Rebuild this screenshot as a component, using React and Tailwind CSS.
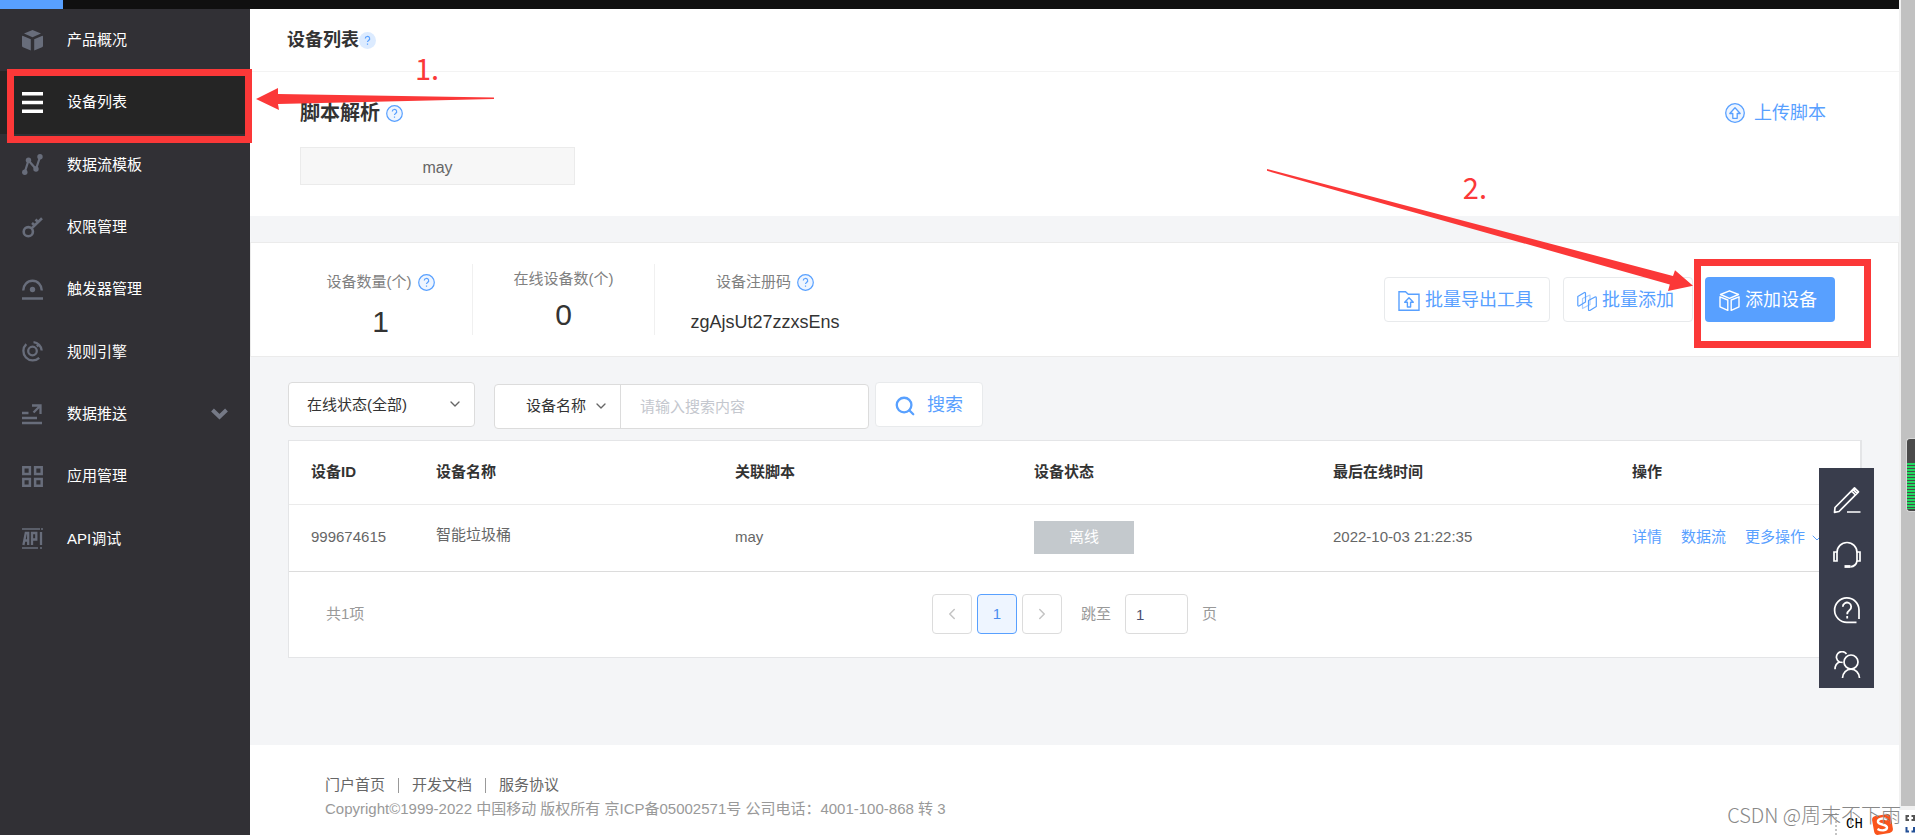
import { ChevronDown, ChevronLeft, ChevronRight, Search } from "lucide-react";

const navItems = [
  { label: "产品概况", icon: CubeIcon },
  { label: "设备列表", icon: ListIcon, active: true },
  { label: "数据流模板", icon: StreamIcon },
  { label: "权限管理", icon: KeyIcon },
  { label: "触发器管理", icon: TriggerIcon },
  { label: "规则引擎", icon: RuleIcon },
  { label: "数据推送", icon: PushIcon, expandable: true },
  { label: "应用管理", icon: AppsIcon },
  { label: "API调试", icon: ApiIcon },
];

const devices = [
  { id: "999674615", name: "智能垃圾桶", script: "may", status: "离线", lastOnline: "2022-10-03 21:22:35" },
];

/* ================= SIDEBAR ICONS ================= */

function CubeIcon() {
  return (
    <svg className="size-[21px]" viewBox="0 0 21 21" fill="currentColor" aria-hidden="true">
      <path d="M10.500 0 19 3.400 10.500 7.200 2 3.400z" />
      <path d="M0 6.800Q0 5.500 1.200 6l7.600 3.200v11.300L1 17.300Q0 17 0 15.800z" />
      <path d="M21 6.800Q21 5.500 19.800 6l-7.600 3.200v11.300l7.800-3.200q1-.300 1-1.500z" />
    </svg>
  );
}

function ListIcon() {
  return (
    <svg className="size-[21px]" viewBox="0 0 21 21" fill="currentColor" aria-hidden="true">
      <path d="M0 0h21v3.400H0zM0 8.800h21v3.400H0zM0 17.600h21V21H0z" />
    </svg>
  );
}

function StreamIcon() {
  return (
    <svg className="size-[21px]" viewBox="0 0 21 21" fill="currentColor" aria-hidden="true">
      <path d="M2.800 18 6.500 6.500 14 15 18 3" fill="none" stroke="currentColor" strokeWidth="2.200" />
      <circle cx="2.800" cy="18.200" r="2.700" />
      <circle cx="6.500" cy="6.300" r="2.700" />
      <circle cx="14" cy="15" r="2.700" />
      <circle cx="18" cy="2.800" r="2.700" />
    </svg>
  );
}

function KeyIcon() {
  return (
    <svg className="size-[21px]" viewBox="0 0 21 21" fill="none" stroke="currentColor" strokeWidth="2.600" aria-hidden="true">
      <circle cx="6.300" cy="14.700" r="4.600" />
      <path d="M9.600 11.400 20 1.200M10 6l3.500 3M13.500 2.500l3.200 3" />
    </svg>
  );
}

function TriggerIcon() {
  return (
    <svg className="size-[21px]" viewBox="0 0 21 21" fill="none" stroke="currentColor" strokeWidth="2.400" aria-hidden="true">
      <path d="M1.200 11.500a9.300 9.800 0 0 1 18.600 0M0 19.500h21" />
      <circle cx="10.500" cy="10.500" r="2.700" fill="currentColor" stroke="none" />
    </svg>
  );
}

function RuleIcon() {
  return (
    <svg className="size-[21px]" viewBox="0 0 21 21" fill="none" stroke="currentColor" strokeWidth="2.300" aria-hidden="true">
      <circle cx="10.500" cy="10" r="4.300" />
      <path d="M4.300 3.200a9.300 9.300 0 0 0 12.900 13.600M11.500 1.200a9 9 0 0 1 8.200 8.300M15 3.500l1.500 2" />
    </svg>
  );
}

function PushIcon() {
  return (
    <svg className="size-[21px]" viewBox="0 0 21 21" fill="none" stroke="currentColor" strokeWidth="2.300" aria-hidden="true">
      <path d="M0 9h6.500M0 14h15M0 19h20M10 1.500h8.500V10M18.500 1.500l-7 7" />
    </svg>
  );
}

function AppsIcon() {
  return (
    <svg className="size-[21px]" viewBox="0 0 21 21" fill="none" stroke="currentColor" strokeWidth="2.500" aria-hidden="true">
      <path d="M1.300 1.300h6.600v6.600H1.300zM13.100 1.300h6.600v6.600h-6.600zM1.300 13.100h6.600v6.600H1.300zM13.100 13.100h6.600v6.600h-6.600z" />
    </svg>
  );
}

function ApiIcon() {
  return (
    <svg className="size-[21px]" viewBox="0 0 21 21" fill="none" stroke="currentColor" strokeWidth="2.300" aria-hidden="true">
      <path d="M0 1h18M19 1h2M0 20h16M18 20h2" strokeWidth="1.600" />
      <path d="M1.400 17 3.800 5h2.400v12M2.500 12.500h3.500M10 17V5h4.300v6.500H10M19 4v13" />
    </svg>
  );
}

/* ================= PAGE ICONS ================= */

function HelpIcon({ plain }) {
  return (
    <svg className="size-[17px] text-[#58a0ff]" viewBox="0 0 17 17" fill="none" stroke="currentColor" aria-hidden="true">
      {plain ? (
        <circle cx="8.500" cy="8.500" r="8.500" fill="#dcebff" stroke="none" />
      ) : (
        <circle cx="8.500" cy="8.500" r="7.800" fill="#eef5ff" strokeWidth="1.200" />
      )}
      <path d="M6.300 6.600a2.200 2.100 0 1 1 3.300 1.800q-1.100.700-1.100 1.700M8.500 11.400v1.400" strokeWidth="1.200" />
    </svg>
  );
}

function UploadIcon() {
  return (
    <svg className="size-5" viewBox="0 0 20 20" fill="none" stroke="currentColor" strokeWidth="1.300" aria-hidden="true">
      <circle cx="10" cy="10" r="9.300" fill="#eef5ff" />
      <path d="M10 4.800 4.800 10.500h3v4.800h4.400v-4.800h3z" fill="#fff" strokeLinejoin="round" />
    </svg>
  );
}

function FolderUpIcon() {
  return (
    <svg className="h-5 w-[22px]" viewBox="0 0 22 20" fill="none" stroke="currentColor" strokeWidth="1.400" aria-hidden="true">
      <path d="M1 .800h6.500l2.800 2.400H21v16H1z" />
      <path d="M11 6.800 6.700 11.300h2.700V16h3.200v-4.700h2.700z" strokeLinejoin="round" />
    </svg>
  );
}

function BatchIcon() {
  return (
    <svg className="size-5" viewBox="0 0 20 20" fill="none" stroke="currentColor" strokeWidth="1.200" strokeLinejoin="round" aria-hidden="true">
      <path d="M.800 5.500 7.500 1.500Q8.500 1.300 8.500 2.500V11L2 15Q.800 15.300.800 14z" />
      <path d="M5.500 7.500 13 4v9.500l-7.500 4z" opacity=".5" />
      <path d="M11.500 9.500 18 6q1.300-.300 1.300 1v8.500l-6.500 4q-1.300.300-1.300-1z" />
    </svg>
  );
}

function BoxIcon() {
  return (
    <svg className="size-[21px]" viewBox="0 0 21 21" fill="none" stroke="currentColor" strokeWidth="1.400" strokeLinejoin="round" aria-hidden="true">
      <path d="M10.500.800 19.500 4.500l-9 3.800-9-3.800z" />
      <path d="M1 6.800v10l7.800 3.600V10zM20 6.800v10l-7.800 3.600V10z" />
    </svg>
  );
}

function PencilIcon() {
  return (
    <svg className="size-7" viewBox="0 0 28 28" fill="none" stroke="currentColor" strokeWidth="1.700" strokeLinejoin="round" aria-hidden="true">
      <path d="M1.500 26.300 2 21.500 21.500 1.800l4 4L6 25.500zM18.500 5l4 4M20 3.400l4 4M14 26h13.500" />
    </svg>
  );
}

function HeadsetIcon() {
  return (
    <svg className="size-7" viewBox="0 0 28 28" fill="none" stroke="currentColor" strokeWidth="1.700" aria-hidden="true">
      <path d="M1 11h3v9H1zM24 11h3v9h-3z" />
      <path d="M4 11.500a10 10 0 0 1 20 0M24 20c-.500 3-3 5.500-6.500 5.800" />
      <path d="M11.500 25.500h6" strokeWidth="2.800" />
    </svg>
  );
}

function QuestionIcon() {
  return (
    <svg className="size-7" viewBox="0 0 28 28" fill="none" stroke="currentColor" strokeWidth="1.700" aria-hidden="true">
      <path d="M26 23V14A12.200 12.200 0 1 0 14 26.300h9.500" />
      <path d="M9.800 10.800a4.200 4.200 0 1 1 6.600 3.400q-2.200 1.600-2.200 4M14.200 20v2.400" strokeWidth="1.800" />
    </svg>
  );
}

function UsersIcon() {
  return (
    <svg className="size-7" viewBox="0 0 28 28" fill="none" stroke="currentColor" strokeWidth="1.700" aria-hidden="true">
      <circle cx="18" cy="11" r="7" />
      <path d="M9.500 27c.300-5.500 4-8.800 8.500-8.800s8.200 3.300 8.500 8.800M13.500 3A5.500 5.500 0 1 0 6.500 11C3.500 12.300 2 15 2 18.300M6.500 11l3.200.500" />
    </svg>
  );
}

/* ================= PARTS ================= */

function Sidebar() {
  return (
    <aside className="w-[250px] shrink-0 bg-[#313035]">
      <nav className="flex h-[561px] flex-col">
        {navItems.map(({ label, icon: Icon, active, expandable }) => (
          <a
            key={label}
            href="#"
            className={`flex flex-1 items-center pl-[22px] pr-[22px] text-[15px] text-white ${active ? "bg-[#252525]" : ""}`}
          >
            <span className={active ? "text-white" : "text-[#686d7b]"}>
              <Icon />
            </span>
            <span className="ml-6">{label}</span>
            {expandable && (
              <svg className="ml-auto h-3 w-[17px] text-[#757986]" viewBox="0 0 17 12" fill="none" stroke="currentColor" strokeWidth="4" aria-hidden="true">
                <path d="M1.500 2 8.500 8.800 15.500 2" />
              </svg>
            )}
          </a>
        ))}
      </nav>
    </aside>
  );
}

function Stat({ label, help, children }) {
  return (
    <div className={`text-center ${help ? "pt-2" : "pt-[5px]"}`}>
      <div className="flex h-5 items-center justify-center gap-[6px] text-[15px] text-[#808080]">
        {label}
        {help && <HelpIcon />}
      </div>
      <div className={`leading-9 text-[#333] ${help ? "mt-3" : "mt-2"}`}>{children}</div>
    </div>
  );
}

function DeviceTable() {
  return (
    <div className="mt-[11px] border border-r-2 border-[#e4e5e7] bg-white">
      <table className="w-full table-fixed text-left text-[15px] text-[#666]">
        <thead>
          <tr className="h-[63px] border-b border-[#ebebeb] text-[#333]">
            <th className="w-[125px] pl-[22px] font-bold">设备ID</th>
            <th className="w-[299px] pl-[22px] font-bold">设备名称</th>
            <th className="w-[299px] pl-[22px] font-bold">关联脚本</th>
            <th className="w-[299px] pl-[22px] font-bold">设备状态</th>
            <th className="w-[299px] pl-[22px] font-bold">最后在线时间</th>
            <th className="pl-[22px] font-bold">操作</th>
          </tr>
        </thead>
        <tbody>
          {devices.map((d) => (
            <tr key={d.id} className="h-[67px] border-b border-[#dcdcdc]">
              <td className="pl-[22px]">{d.id}</td>
              <td className="pb-1 pl-[22px]">{d.name}</td>
              <td className="pl-[22px]">{d.script}</td>
              <td className="pl-[22px]">
                <span className="block h-[33px] w-[100px] bg-[#c4c9cd] text-center leading-8 text-white">{d.status}</span>
              </td>
              <td className="pl-[22px]">{d.lastOnline}</td>
              <td className="pl-[22px]">
                <div className="flex items-center gap-[19px] whitespace-nowrap text-[#58a0ff]">
                  <a href="#">详情</a>
                  <a href="#">数据流</a>
                  <button className="flex items-center gap-1">
                    更多操作
                    <ChevronDown className="size-4" strokeWidth={1.5} />
                  </button>
                </div>
              </td>
            </tr>
          ))}
        </tbody>
      </table>

      {/* Pagination */}
      <div className="grid h-[85px] grid-cols-[643px_1fr] items-center text-[15px] text-[#999]">
        <span className="pl-[37px]">共1项</span>
        <div className="flex items-center">
          <button aria-label="上一页" className="flex h-10 w-10 items-center justify-center rounded-sm border border-[#dcdcdc] text-[#c4c4c4]">
            <ChevronLeft className="size-[18px]" />
          </button>
          <button className="ml-[5px] h-10 w-10 rounded-sm border border-[#58a0ff] bg-[#eef5ff] text-[#4a8df0]">1</button>
          <button aria-label="下一页" className="ml-[5px] flex h-10 w-10 items-center justify-center rounded-sm border border-[#dcdcdc] text-[#c4c4c4]">
            <ChevronRight className="size-[18px]" />
          </button>
          <label htmlFor="page" className="ml-[19px]">跳至</label>
          <input id="page" defaultValue="1" className="ml-[14px] mr-[14px] h-10 w-[63px] rounded-sm border border-[#dcdcdc] pl-[10px] text-[#4a4f70]" />
          <span>页</span>
        </div>
      </div>
    </div>
  );
}

function Annotations() {
  return (
    <div className="pointer-events-none absolute inset-0 overflow-hidden font-['Noto_Sans_CJK_SC',sans-serif] text-[29px] leading-8 text-[#fb3838]">
      <div className="absolute left-[7px] top-[69px] h-[74px] w-[245px] border-[7px] border-[#fb3838]" />
      <svg className="absolute left-[256px] top-[88px] h-[22px] w-[238px]" viewBox="0 0 238 22" fill="currentColor" aria-hidden="true">
        <path d="M0 11 22 0v6l216 3.500v1.500L22 16l1 6z" />
      </svg>
      <span className="absolute left-[415px] top-[51px]">1.</span>

      <div className="absolute right-[44px] top-[259px] h-[89px] w-[177px] border-[7px] border-[#fb3838]" />
      <svg className="absolute right-[222px] top-[169px] h-[122px] w-[426px]" viewBox="0 0 426 122" fill="currentColor" aria-hidden="true">
        <path d="M0 0 406 107l2-5.800 18 15.600-25 5.200 1.800-6.500L0 1.800z" />
      </svg>
      <span className="absolute right-[428px] top-[170px]">2.</span>
    </div>
  );
}

function App() {
  return (
    <div className="relative flex min-h-screen bg-white font-['Liberation_Sans','Noto_Sans_CJK_SC',sans-serif]">
      <div className="flex min-w-0 flex-1 flex-col">
        {/* Top bar */}
        <div className="h-[9px] bg-[#101010]">
          <div className="h-full w-[63px] bg-[#58a0ff]" />
        </div>

        <div className="flex flex-1">
          <Sidebar />

          <main className="flex min-w-0 flex-1 flex-col bg-[#f4f5f7]">
            <header className="flex h-[63px] items-center border-b border-[#f3f3f3] bg-white pl-[37px]">
              <h1 className="text-[18px] font-bold text-[#333]">设备列表</h1>
              <HelpIcon plain />
            </header>

            {/* Script */}
            <section className="flex justify-between bg-white pb-[31px] pl-[50px] pr-[73px] pt-[26px]">
              <div>
                <div className="flex h-[30px] items-center gap-[6px]">
                  <h2 className="text-[20px] font-bold text-[#333]">脚本解析</h2>
                  <HelpIcon />
                </div>
                <div className="mt-[19px] flex h-[38px] w-[275px] items-center justify-center border border-[#ebebeb] bg-[#f7f7f7] pt-[3px] text-[16px] text-[#666]">
                  may
                </div>
              </div>
              <button className="flex h-[30px] items-center gap-[9px] text-[18px] text-[#58a0ff]">
                <UploadIcon />
                上传脚本
              </button>
            </section>

            {/* Summary */}
            <section className="mt-[26px] flex h-[115px] items-center justify-between border border-[#ebebeb] bg-white pl-[38px] pr-[63px]">
              <div className="flex h-[71px] divide-x divide-[#f0f0f0]">
                <div className="w-[184px]">
                  <Stat label="设备数量(个)" help>
                    <span className="text-[30px]">1</span>
                  </Stat>
                </div>
                <div className="w-[182px]">
                  <Stat label="在线设备数(个)">
                    <span className="text-[30px]">0</span>
                  </Stat>
                </div>
                <div className="w-[220px]">
                  <Stat label="设备注册码" help>
                    <span className="text-[18px]">zgAjsUt27zzxsEns</span>
                  </Stat>
                </div>
              </div>
              <div className="flex text-[18px] text-[#58a0ff]">
                <button className="flex h-[45px] w-[166px] items-center gap-[5px] rounded-sm border border-[#e8eaec] pl-[13px] pt-0.5">
                  <FolderUpIcon />
                  批量导出工具
                </button>
                <button className="ml-[13px] flex h-[45px] w-[130px] items-center gap-[5px] rounded-sm border border-[#e8eaec] pl-[13px] pt-0.5">
                  <BatchIcon />
                  批量添加
                </button>
                <button className="ml-3 flex h-[45px] w-[130px] items-center gap-[5px] rounded-sm bg-[#58a0ff] pl-[14px] pt-0.5 text-white">
                  <BoxIcon />
                  添加设备
                </button>
              </div>
            </section>

            <section className="flex-1 pb-[80px] pl-[38px] pr-[37px] pt-[25px]">
              {/* Filters */}
              <div className="flex items-start text-[15px] text-[#333]">
                <div className="relative">
                  <select aria-label="在线状态" className="h-[45px] w-[187px] appearance-none rounded-sm border border-[#dcdcdc] bg-white pl-[18px] pt-0.5">
                    <option>在线状态(全部)</option>
                  </select>
                  <ChevronDown className="pointer-events-none absolute right-3 top-[14px] size-4 text-[#666]" />
                </div>
                <div className="ml-[19px] mt-0.5 flex h-[45px] w-[375px] rounded-sm border border-[#dcdcdc] bg-white">
                  <div className="relative">
                    <select aria-label="搜索字段" className="h-full w-[126px] appearance-none border-r border-[#dcdcdc] pl-[31px]">
                      <option>设备名称</option>
                    </select>
                    <ChevronDown className="pointer-events-none absolute right-3 top-[13px] size-4 text-[#666]" />
                  </div>
                  <input aria-label="搜索内容" placeholder="请输入搜索内容" className="min-w-0 flex-1 pl-[19px] pt-0.5 placeholder:text-[#c4c7ce]" />
                </div>
                <button className="ml-[6px] flex h-[45px] w-[108px] items-center gap-[11px] rounded-sm border border-[#e8eaec] bg-white pl-[18px] pt-0.5 text-[18px] text-[#58a0ff]">
                  <Search className="size-[22px]" strokeWidth={2.5} />
                  搜索
                </button>
              </div>

              <DeviceTable />
            </section>

            <footer className="bg-white pb-4 pl-[75px] pt-[30px] text-[15px] leading-5 text-[#999]">
              <div className="flex items-center gap-[13px] text-[#666]">
                <a href="#">门户首页</a>
                <span className="h-[15px] w-px bg-[#999]" />
                <a href="#">开发文档</a>
                <span className="h-[15px] w-px bg-[#999]" />
                <a href="#">服务协议</a>
              </div>
              <p className="mt-1">Copyright©1999-2022 中国移动 版权所有 京ICP备05002571号 公司电话：4001-100-868 转 3</p>
            </footer>
          </main>
        </div>
      </div>

      {/* Scrollbar */}
      <div className="w-4 shrink-0 pb-[25px]">
        <div className="h-full border-b-4 border-l-2 border-[#f1f1f1] bg-[#c1c1c1]" />
      </div>
      <div className="absolute right-0 top-[438px] h-[74px] w-[9px] rounded-l-sm border border-r-0 border-[#d8d8d8] bg-[#4a4a4a] pt-6">
        <div className="h-[46px] bg-[repeating-linear-gradient(#22d860_0_2px,#4a4a4a_2px_3px)]" />
      </div>

      {/* Floating tools */}
      <div className="absolute right-[41px] top-[468px] flex w-[55px] flex-col bg-[#393d4c] text-white">
        <button aria-label="反馈" className="flex h-[55px] items-center justify-center pt-2"><PencilIcon /></button>
        <button aria-label="客服" className="flex h-[55px] items-center justify-center pt-2"><HeadsetIcon /></button>
        <button aria-label="帮助" className="flex h-[55px] items-center justify-center pt-2"><QuestionIcon /></button>
        <button aria-label="社区" className="flex h-[55px] items-center justify-center pt-2"><UsersIcon /></button>
      </div>

      {/* Language bar */}
      <div className="absolute bottom-0 right-0 flex h-[22px] w-20 items-center overflow-hidden">
        <span className="h-full border-l-2 border-dotted border-[#c4c4c4]" />
        <span className="ml-[9px] font-['Liberation_Mono',monospace] text-[14px] text-black">CH</span>
        <svg className="ml-[9px] size-[21px] shrink-0" viewBox="0 0 21 21" aria-hidden="true">
          <rect x="1" y="1" width="19" height="19" rx="4" fill="#fa541c" transform="rotate(-10 10.500 10.500)" />
          <path d="M15 5.500C10 3.500 5.500 5 6 8s9 2 9 5.500-6 3.500-9.500 1.500" fill="none" stroke="#fff" strokeWidth="2.400" />
        </svg>
        <svg className="ml-3 h-[22px] w-[10px] shrink-0" viewBox="0 0 10 22" fill="none" strokeWidth="2" aria-hidden="true">
          <path d="M4 7H1.500V3H4M6.500 7H9V3H6.500" stroke="#555" />
          <path d="M1.500 14v4.500H4M9 14v4.500H6.500" stroke="#234f96" />
        </svg>
      </div>
      <span className="absolute bottom-[6px] right-[14px] font-['Noto_Sans_CJK_SC',sans-serif] text-[20px] leading-7 font-light text-[#888]">
        CSDN @周末不下雨
      </span>

      <Annotations />
    </div>
  );
}

export default App;
